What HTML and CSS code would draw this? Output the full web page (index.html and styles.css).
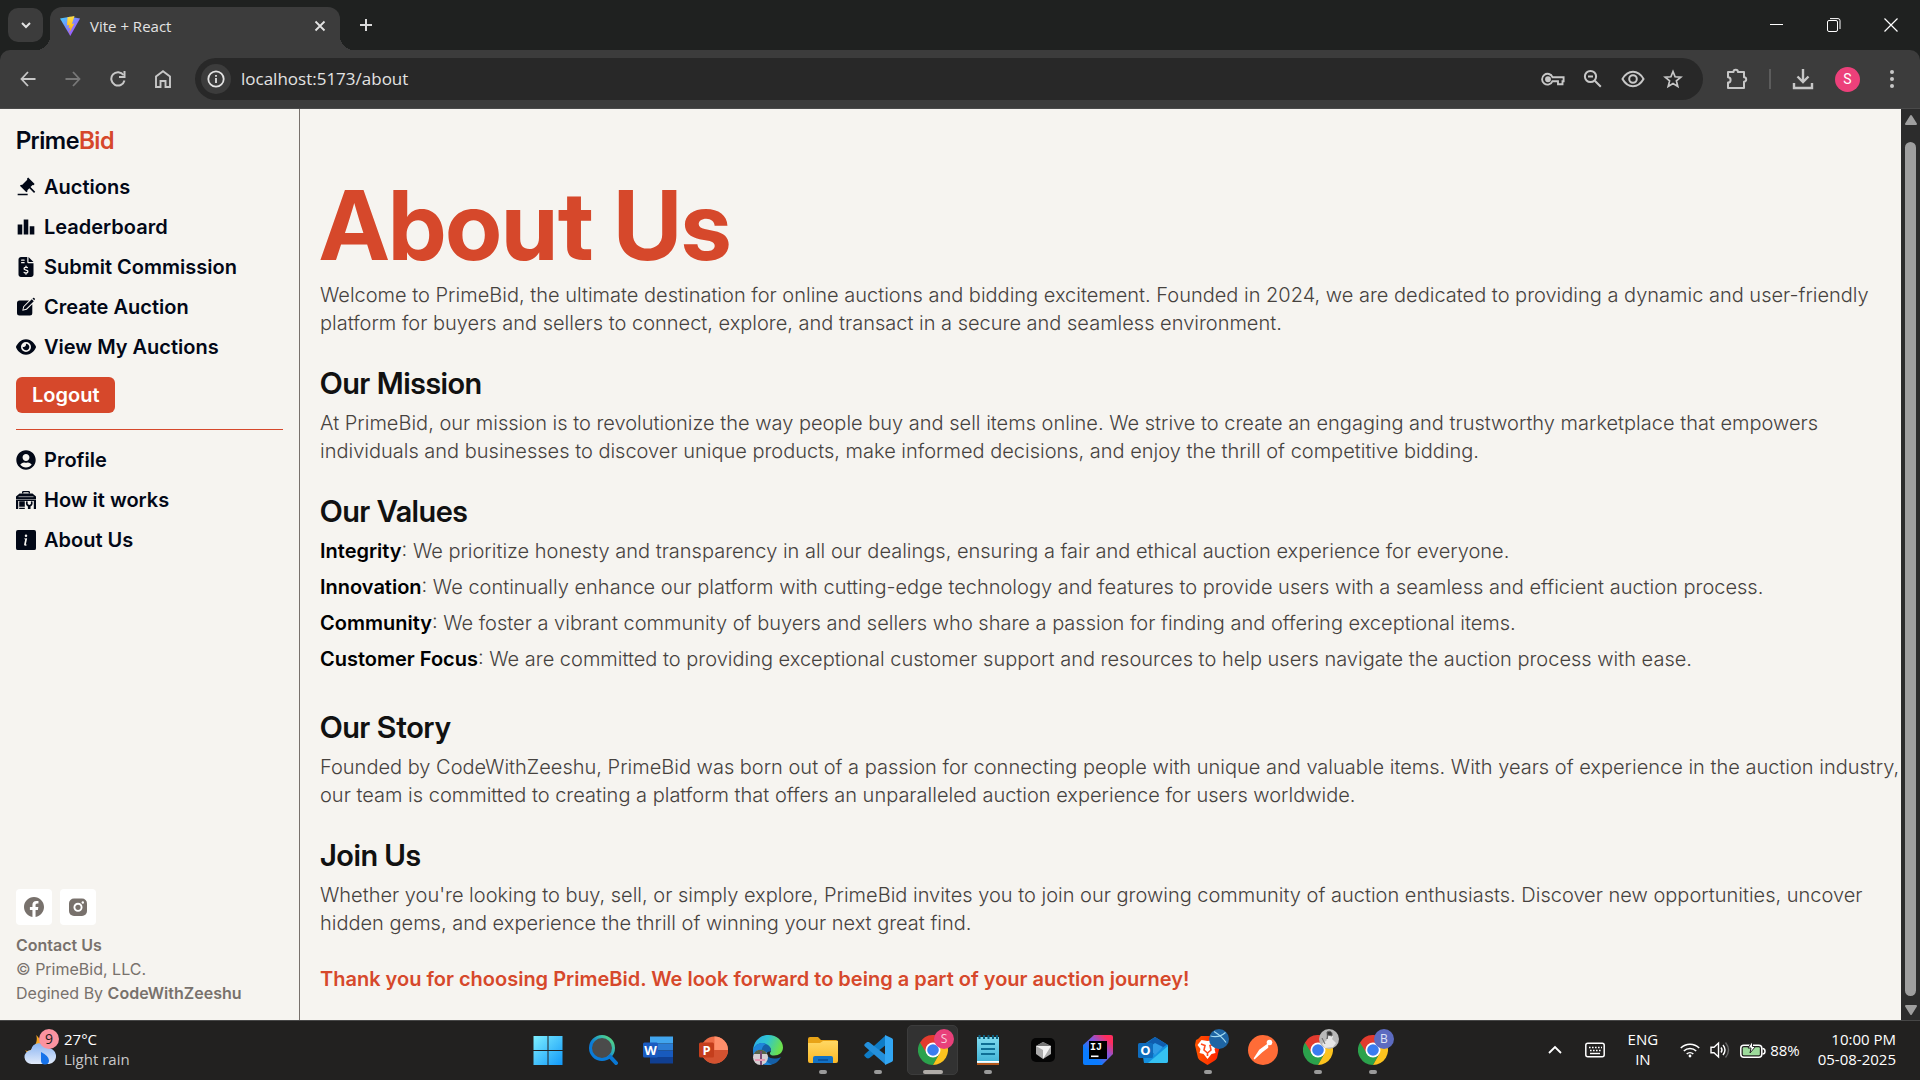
FILE: index.html
```html
<!DOCTYPE html>
<html lang="en">
<head>
<meta charset="utf-8">
<title>Vite + React</title>
<link rel="stylesheet" href="styles.css">
</head>
<body>
<svg class="defs" aria-hidden="true">
  <defs>
    <linearGradient id="vite-a" x1="0" y1="0" x2="1" y2="1"><stop offset="0" stop-color="#41d1ff"/><stop offset="1" stop-color="#bd34fe"/></linearGradient>
    <linearGradient id="vite-b" x1="0" y1="0" x2="0" y2="1"><stop offset="0" stop-color="#ffe04a"/><stop offset="1" stop-color="#ffa800"/></linearGradient>
    <linearGradient id="win" x1="0" y1="0" x2="1" y2="1"><stop offset="0" stop-color="#7defff"/><stop offset="1" stop-color="#1198f8"/></linearGradient>
    <linearGradient id="lens" x1="0" y1="1" x2="1" y2="0"><stop offset="0.4" stop-color="#0a7bd8"/><stop offset="0.7" stop-color="#34b8b0"/><stop offset="1" stop-color="#62e070"/></linearGradient>
    <linearGradient id="edge-a" x1="0" y1="0" x2="1" y2="0.3"><stop offset="0" stop-color="#2ba8ec"/><stop offset="0.5" stop-color="#2fc5d2"/><stop offset="1" stop-color="#6be04e"/></linearGradient>
    <linearGradient id="cloud" x1="0" y1="0" x2="0" y2="1"><stop offset="0" stop-color="#8ab4f2"/><stop offset="1" stop-color="#e2ebfa"/></linearGradient>
    <linearGradient id="folder" x1="0" y1="0" x2="0" y2="1"><stop offset="0" stop-color="#ffd864"/><stop offset="1" stop-color="#fbb826"/></linearGradient>
    <linearGradient id="idea" x1="0" y1="1" x2="1" y2="0"><stop offset="0.3" stop-color="#0a7cff"/><stop offset="0.6" stop-color="#8a55d8"/><stop offset="0.85" stop-color="#ff2d5e"/></linearGradient>
    <linearGradient id="note" x1="0" y1="0" x2="0" y2="1"><stop offset="0" stop-color="#80dcf0"/><stop offset="1" stop-color="#3fb3d6"/></linearGradient>
    <linearGradient id="brave" x1="0" y1="0" x2="1" y2="0"><stop offset="0" stop-color="#ff5500"/><stop offset="1" stop-color="#ff2000"/></linearGradient>
    <symbol id="chrome" viewBox="0 0 30 30">
      <path d="M15 15 2 7.500A15 15 0 0 1 28 7.500L28 8H15z" fill="#e33b2e"/>
      <path d="M15 15 2 7.500A15 15 0 0 0 15 30L21.500 18.500z" fill="#2ba24c"/>
      <path d="M15 8H28.300A15 15 0 0 1 15 30L21.500 18.500z" fill="#fcc31e"/>
      <path d="M2 7.500 8.500 18.500 15 15z" fill="#2ba24c"/>
      <path d="M2 7.500 8.500 18 15 8H28L15 3z" fill="#e33b2e"/>
      <circle cx="15" cy="15" r="7.500" fill="#fff"/><circle cx="15" cy="15" r="5.800" fill="#3a7cf0"/>
    </symbol>
  </defs>
</svg>

<header class="browser">
  <div class="tabstrip">
    <button class="tab-search" aria-label="Search tabs"><svg width="12" height="12" viewBox="0 0 12 12"><path d="M2 4l4 4 4-4" fill="none" stroke="#e3e3e3" stroke-width="2"/></svg></button>
    <div class="tab">
      <svg width="20" height="20" viewBox="0 0 20 20"><path d="M0 2.500 10 .8 20 2.500 10.300 20z" fill="url(#vite-a)"/><path d="M14.500 0 7.500 1.300 7 9.500l2.200-.5-.7 3.200 2-.6-1.400 5.600 5.200-9.700-2.400.5z" fill="url(#vite-b)"/></svg>
      <span class="tab-title">Vite + React</span>
      <button class="icon-button tab-close" aria-label="Close tab"><svg width="12" height="12" viewBox="0 0 12 12"><path d="M1.500 1.500l9 9m0-9l-9 9" stroke="#e3e3e3" stroke-width="1.800"/></svg></button>
    </div>
    <button class="icon-button new-tab" aria-label="New tab"><svg width="14" height="14" viewBox="0 0 14 14"><path d="M7 1v12M1 7h12" stroke="#dadada" stroke-width="2"/></svg></button>
    <div class="window-buttons">
      <button class="icon-button" aria-label="Minimize"><svg width="14" height="14" viewBox="0 0 14 14"><path d="M0 6.500h13" stroke="#fff"/></svg></button>
      <button class="icon-button" aria-label="Restore"><svg width="14" height="14" viewBox="0 0 14 14" fill="none" stroke="#fff"><rect x=".5" y="2.500" width="10" height="11" rx="1.500"/><path d="M3 .6h8a2 2 0 0 1 2 2v8.400"/></svg></button>
      <button class="icon-button" aria-label="Close"><svg width="14" height="14" viewBox="0 0 14 14"><path d="M.5.5l13 13m0-13l-13 13" stroke="#fff" stroke-width="1.200"/></svg></button>
    </div>
  </div>
  <div class="toolbar">
    <div class="nav-buttons">
      <button class="icon-button" aria-label="Back"><svg width="16" height="16" viewBox="0 0 16 16" fill="none" stroke="#c7c7c7" stroke-width="1.800"><path d="M15.500 8H1.500M8 1L1.500 8 8 15"/></svg></button>
      <button class="icon-button" aria-label="Forward"><svg width="16" height="16" viewBox="0 0 16 16" fill="none" stroke="#787878" stroke-width="1.800"><path d="M.5 8h14M8 1l6.500 7L8 15"/></svg></button>
      <button class="icon-button" aria-label="Reload"><svg width="16" height="16" viewBox="0 0 16 16" fill="none" stroke="#c7c7c7" stroke-width="2"><path d="M14.500 9.500A6.700 6.700 0 1 1 13.500 4"/><path d="M14.500 0v6H9"/></svg></button>
      <button class="icon-button" aria-label="Home"><svg width="16" height="18" viewBox="0 0 16 18" fill="none" stroke="#c7c7c7" stroke-width="1.900"><path d="M1 17V6.500l7-5.300 7 5.300V17h-4.500v-6h-5v6z"/></svg></button>
    </div>
    <div class="omnibox">
      <button class="site-info" aria-label="Site information"><svg width="18" height="18" viewBox="0 0 18 18"><circle cx="9" cy="9" r="7.700" fill="none" stroke="#e3e3e3" stroke-width="1.800"/><path d="M9 8v5M9 5v1.800" stroke="#e3e3e3" stroke-width="1.800"/></svg></button>
      <input class="address" type="text" aria-label="Address" value="localhost:5173/about">
      <div class="omnibox-actions">
        <button class="icon-button" aria-label="Passwords"><svg width="24" height="24" viewBox="0 0 24 24" fill="none" stroke="#c7c7c7" stroke-width="1.900"><path d="M11.500 10.200A5.400 5.400 0 1 0 11.500 14.200H17v3h4.500v-3H22.600v-4z"/><circle cx="7" cy="12.200" r="2" fill="#c7c7c7"/></svg></button>
        <button class="icon-button" aria-label="Zoom"><svg width="20" height="20" viewBox="0 0 20 20" fill="none" stroke="#c7c7c7" stroke-width="2"><circle cx="7.500" cy="7.500" r="5.600"/><path d="M11.800 11.800l6 6M5 7.500h5"/></svg></button>
        <button class="icon-button" aria-label="Reading view"><svg width="24" height="24" viewBox="0 0 24 24" fill="none" stroke="#c7c7c7" stroke-width="2"><path d="M1.500 12Q5.500 4.800 12 4.800T22.500 12Q18.500 19.200 12 19.200T1.500 12z"/><circle cx="12" cy="12" r="3.800"/></svg></button>
        <button class="icon-button" aria-label="Bookmark"><svg width="20" height="20" viewBox="0 0 20 20" fill="none" stroke="#c7c7c7" stroke-width="1.700"><path d="M10 2.500l2.100 5.300 5.700.4-4.400 3.700 1.400 5.600L10 14.500l-4.800 3 1.400-5.600L2.200 8.200l5.700-.4z"/></svg></button>
      </div>
    </div>
    <div class="toolbar-end">
      <button class="icon-button" aria-label="Extensions"><svg width="22" height="22" viewBox="0 0 22 22"><path d="M2 4h5.500a2.200 2.200 0 0 1 4.400 0H18v5.300a2.200 2.200 0 0 1 0 4.400V20H2v-5.500a2.600 2.600 0 0 0 0-5.200z" fill="none" stroke="#c7c7c7" stroke-width="2" stroke-linejoin="round"/></svg></button>
      <span class="toolbar-rule"></span>
      <button class="icon-button" aria-label="Downloads"><svg width="22" height="22" viewBox="0 0 22 22" fill="none" stroke="#c7c7c7" stroke-width="2.400"><path d="M11 1v13M5.500 8.500L11 14l5.500-5.500M2 15v5h18v-5"/></svg></button>
      <button class="avatar">S</button>
      <button class="icon-button more" aria-label="Menu"><svg width="6" height="20" viewBox="0 0 6 20" fill="#c7c7c7"><circle cx="3" cy="3" r="2"/><circle cx="3" cy="10" r="2"/><circle cx="3" cy="17" r="2"/></svg></button>
    </div>
  </div>
</header>

<div class="viewport">
  <aside class="sidebar">
    <a class="brand" href="#">Prime<span class="accent">Bid</span></a>
    <nav class="menu">
      <a href="#"><svg viewBox="0 0 24 24"><path d="M14 20v2H2v-2h12zM14.586.686l7.778 7.778L20.950 9.880l-1.060-.354L17.413 12l5.657 5.657-1.414 1.414L16 13.414l-2.404 2.404.283 1.132-1.415 1.414-7.778-7.778 1.415-1.414 1.130.282 6.294-6.293-.353-1.060L14.586.686z"/></svg>Auctions</a>
      <a href="#"><svg viewBox="0 0 24 24"><path d="M7.500 21H2V9h5.500v12zm7.250-18h-5.500v18h5.500V3zM22 11h-5.500v10H22V11z"/></svg>Leaderboard</a>
      <a href="#"><svg viewBox="0 0 384 512"><path d="M64 0C28.700 0 0 28.700 0 64V448c0 35.300 28.700 64 64 64H320c35.300 0 64-28.700 64-64V160H256c-17.700 0-32-14.300-32-32V0H64zM256 0V128H384L256 0zM64 80c0-8.800 7.200-16 16-16h64c8.800 0 16 7.200 16 16s-7.200 16-16 16H80c-8.800 0-16-7.200-16-16zm0 64c0-8.800 7.200-16 16-16h64c8.800 0 16 7.200 16 16s-7.200 16-16 16H80c-8.800 0-16-7.200-16-16zm128 72c8.800 0 16 7.200 16 16v17.300c8.500 1.200 16.700 3.100 24.100 5.100c8.500 2.300 13.600 11 11.300 19.600s-11 13.600-19.600 11.300c-11.100-3-22-5.200-32.100-5.300c-8.400-.1-17.400 1.800-23.600 5.500c-5.700 3.400-8.100 7.300-8.100 12.800c0 3.700 1.300 6.500 7.300 10.100c6.900 4.100 16.600 7.100 29.200 10.900l.5 .1c11.300 3.400 25.300 7.600 36.300 14.600c12.100 7.600 22.400 19.700 22.700 38.200c.3 19.300-9.600 33.300-22.900 41.600c-7.700 4.800-16.400 7.600-25.100 9.100V440c0 8.800-7.200 16-16 16s-16-7.200-16-16V422.200c-11.200-2.100-21.700-5.700-30.900-8.900c-2.100-.7-4.200-1.400-6.200-2.100c-8.400-2.800-12.900-11.900-10.100-20.200s11.900-12.900 20.200-10.100c2.500 .8 4.800 1.600 7.100 2.400c13.600 4.600 24.600 8.400 36.300 8.700c9.100 .3 17.900-1.700 23.700-5.300c5.100-3.200 7.900-7.300 7.800-14c-.1-4.600-1.800-7.800-7.700-11.600c-6.800-4.300-16.500-7.400-29-11.200l-1.600-.5c-11-3.300-24.300-7.300-34.800-13.700c-12-7.200-22.600-18.900-22.700-37.300c-.1-19.400 10.800-32.800 23.800-40.500c7.500-4.400 15.800-7.200 24.100-8.700V232c0-8.800 7.200-16 16-16z"/></svg>Submit Commission</a>
      <a href="#"><svg viewBox="0 0 20 20"><path d="M3.500 3.500H13L7.200 9.400 6.300 13.800l4.500-1L16.300 7.200V16a2.500 2.500 0 0 1-2.500 2.500H3.500A2.500 2.500 0 0 1 1 16V6a2.500 2.500 0 0 1 2.500-2.500z"/><path d="M7.400 12.600l.8-2.800 7.600-7.600 2 2-7.600 7.600zM16.500 1.600l.9-.9c.5-.4 2.100 1 1.600 1.600l-.8.9z" /></svg>Create Auction</a>
      <a href="#"><svg viewBox="0 0 576 512"><path d="M288 32c-80.800 0-145.500 36.800-192.600 80.600C48.600 156 17.300 208 2.500 243.700c-3.300 7.900-3.300 16.700 0 24.600C17.300 304 48.600 356 95.400 399.400C142.500 443.200 207.200 480 288 480s145.500-36.800 192.600-80.600c46.800-43.500 78.100-95.400 93-131.100c3.300-7.900 3.300-16.700 0-24.600c-14.900-35.700-46.200-87.700-93-131.100C433.500 68.800 368.800 32 288 32zM144 256a144 144 0 1 1 288 0 144 144 0 1 1 -288 0zm144-64c0 35.300-28.700 64-64 64c-7.100 0-13.900-1.200-20.300-3.300c-5.500-1.800-11.900 1.600-11.700 7.400c.3 6.900 1.300 13.800 3.200 20.700c13.700 51.200 66.400 81.600 117.600 67.900s81.600-66.400 67.900-117.600c-11.100-41.500-47.800-69.400-88.600-71.100c-5.800-.2-9.200 6.100-7.400 11.700c2.100 6.400 3.300 13.200 3.300 20.300z"/></svg>View My Auctions</a>
    </nav>
    <button class="logout">Logout</button>
    <hr class="divider">
    <nav class="menu">
      <a href="#"><svg viewBox="0 0 496 512"><path d="M248 8C111 8 0 119 0 256s111 248 248 248 248-111 248-248S385 8 248 8zm0 96c48.600 0 88 39.400 88 88s-39.400 88-88 88-88-39.400-88-88 39.400-88 88-88zm0 344c-58.700 0-111.300-26.600-146.500-68.200 18.800-35.400 55.600-59.800 98.500-59.800 2.400 0 4.800.4 7.100 1.100 13 4.200 26.600 6.900 40.900 6.900 14.300 0 28-2.700 40.900-6.900 2.300-.7 4.700-1.100 7.100-1.100 42.900 0 79.700 24.400 98.500 59.800C359.300 421.400 306.700 448 248 448z"/></svg>Profile</a>
      <a href="#"><svg viewBox="0 0 20 20"><path d="M6 3.500V2.300Q6 1 7.300 1h5.400Q14 1 14 2.300v1.200h-1.400V2.300H7.400v1.200z"/><path d="M3.500 3.500h13L20 6.500V9H0V6.500z"/><path d="M0 9.600h20V19h-2.200v-8H2.200v8H0z"/><path d="M3.200 11.300h5.600v5.500H3.200zM3.200 17.700h5.600V19H3.200zM10.200 11.300c-1 2.600.2 4.600 1.700 5.300V19h2.600v-2.400c1.700-.8 2.800-2.900 1.800-5.300l-1.400.2v2.600l-1.700.8-1.500-.8v-2.600z"/><path d="M2.500 6.700h15" stroke="#f6f4f0" stroke-width=".6"/></svg>How it works</a>
      <a href="#"><svg viewBox="0 0 16 16"><path d="M0 1.500A1.500 1.500 0 0 1 1.500 0h13A1.500 1.500 0 0 1 16 1.500v13a1.500 1.500 0 0 1-1.500 1.500h-13A1.500 1.500 0 0 1 0 14.500zm8.930 5.088-2.290.287-.082.380.450.083c.294.070.352.176.288.469l-.738 3.468c-.194.897.105 1.319.808 1.319.545 0 1.178-.252 1.465-.598l.088-.416c-.2.176-.492.246-.686.246-.275 0-.375-.193-.304-.533L8.930 6.588zM8 5.500a1 1 0 1 0 0-2 1 1 0 0 0 0 2z"/></svg>About Us</a>
    </nav>
    <footer class="side-footer">
      <div class="social">
        <a href="#" aria-label="Facebook"><svg viewBox="2 2 20 20"><path d="M12 2C6.477 2 2 6.477 2 12c0 4.991 3.657 9.128 8.438 9.879V14.890h-2.540V12h2.540V9.797c0-2.506 1.492-3.890 3.777-3.890 1.094 0 2.238.195 2.238.195v2.460h-1.260c-1.243 0-1.630.771-1.630 1.562V12h2.773l-.443 2.890h-2.330v6.989C18.343 21.129 22 16.990 22 12c0-5.523-4.477-10-10-10z"/></svg></a>
        <a href="#" aria-label="Instagram"><svg viewBox="0 0 20 20"><rect x="1" y="1.500" width="18" height="17.500" rx="5"/><circle cx="10" cy="10.300" r="3.600" fill="none" stroke="#fff" stroke-width="1.900"/><circle cx="14.800" cy="5.500" r="1.200" fill="#fff"/></svg></a>
      </div>
      <a class="strong" href="#">Contact Us</a>
      <span>© PrimeBid, LLC.</span>
      <span>Degined By <a class="strong" href="#">CodeWithZeeshu</a></span>
    </footer>
  </aside>

  <main class="content">
    <h1>About Us</h1>
    <p>Welcome to PrimeBid, the ultimate destination for online auctions and bidding excitement. Founded in 2024, we are dedicated to providing a dynamic and user-friendly platform for buyers and sellers to connect, explore, and transact in a secure and seamless environment.</p>
    <section>
      <h2>Our Mission</h2>
      <p>At PrimeBid, our mission is to revolutionize the way people buy and sell items online. We strive to create an engaging and trustworthy marketplace that empowers individuals and businesses to discover unique products, make informed decisions, and enjoy the thrill of competitive bidding.</p>
    </section>
    <section>
      <h2>Our Values</h2>
      <ul class="values">
        <li><b>Integrity</b>: We prioritize honesty and transparency in all our dealings, ensuring a fair and ethical auction experience for everyone.</li>
        <li><b>Innovation</b>: We continually enhance our platform with cutting-edge technology and features to provide users with a seamless and efficient auction process.</li>
        <li><b>Community</b>: We foster a vibrant community of buyers and sellers who share a passion for finding and offering exceptional items.</li>
        <li><b>Customer Focus</b>: We are committed to providing exceptional customer support and resources to help users navigate the auction process with ease.</li>
      </ul>
    </section>
    <section>
      <h2>Our Story</h2>
      <p>Founded by CodeWithZeeshu, PrimeBid was born out of a passion for connecting people with unique and valuable items. With years of experience in the auction industry, our team is committed to creating a platform that offers an unparalleled auction experience for users worldwide.</p>
    </section>
    <section>
      <h2>Join Us</h2>
      <p>Whether you're looking to buy, sell, or simply explore, PrimeBid invites you to join our growing community of auction enthusiasts. Discover new opportunities, uncover hidden gems, and experience the thrill of winning your next great find.</p>
    </section>
    <p class="thanks">Thank you for choosing PrimeBid. We look forward to being a part of your auction journey!</p>
  </main>

  <div class="scrollbar" aria-hidden="true">
    <svg width="14" height="12" viewBox="0 0 14 12"><path d="M7 2l5 8H2z" fill="#9f9f9f" stroke="#9f9f9f" stroke-width="2" stroke-linejoin="round"/></svg>
    <span class="thumb"></span>
    <svg width="14" height="12" viewBox="0 0 14 12"><path d="M7 10L2 2h10z" fill="#9f9f9f" stroke="#9f9f9f" stroke-width="2" stroke-linejoin="round"/></svg>
  </div>
</div>

<footer class="taskbar">
  <div class="weather">
    <div class="weather-icon">
      <svg width="32" height="32" viewBox="0 0 32 32"><path d="M12 1c2 4 0 10-3 13-3 3-6 4-8 2 3 5 11 6 14 2s2-14-3-17z" fill="#f5a623"/><path d="M8 30a7 7 0 0 1-1-14 8.500 8.500 0 0 1 16-2 8 8 0 0 1 2 16z" fill="url(#cloud)"/><path d="M17 18q8 4 8 8.500a4 4 0 0 1-8 0z" fill="#1672ea"/></svg>
      <span class="badge badge-pink">9</span>
    </div>
    <div class="weather-text"><span>27°C</span><span class="dim">Light rain</span></div>
  </div>

  <div class="apps">
    <button aria-label="Start"><svg viewBox="0 0 30 30" fill="url(#win)"><path d="M.5 1h14v14h-14zM15.500 1h14v14h-14zM.5 16h14v14h-14zM15.500 16h14v14h-14z"/></svg></button>
    <button aria-label="Search"><svg viewBox="0 0 30 30"><circle cx="14" cy="13" r="11.500" fill="#4b4b4b" stroke="url(#lens)" stroke-width="3"/><path d="M22 21.500l6 6.500" stroke="#0a78d4" stroke-width="4" stroke-linecap="round"/></svg></button>
    <button aria-label="Word"><svg viewBox="0 0 30 30"><path d="M7 1.500h23v7H7z" fill="#41a5ee"/><path d="M7 8.500h23v7H7z" fill="#2b7cd3"/><path d="M7 15.500h23v6.500H7z" fill="#185abd"/><path d="M7 22h23v6.500H7z" fill="#103f91"/><rect y="7.500" width="15" height="15" rx="1.500" fill="#1a5bc0"/><text class="glyph" x="7.500" y="19.500" text-anchor="middle" font-size="13">W</text></svg></button>
    <button aria-label="PowerPoint"><svg viewBox="0 0 30 30"><circle cx="16.500" cy="15" r="13.500" fill="#ed6c47"/><path d="M16.500 1.500A13.500 13.500 0 0 1 30 15H16.500z" fill="#ff8f6b"/><path d="M3 15a13.500 13.500 0 0 0 27 0z" fill="#d35230"/><rect x="1" y="7.500" width="15" height="15" rx="1.500" fill="#c43e1c"/><text class="glyph" x="8.500" y="19.500" text-anchor="middle" font-size="13">P</text></svg></button>
    <button aria-label="Edge"><svg viewBox="0 0 30 30"><path d="M0 15C1 6 7 0 15.500 0 24 0 30 6 30 12.500c0 5-4 8-9 8-3.500 0-5-1.500-3.500-3.500 1.500-2.500-.5-6-5-6C7 11 3 13 0 19z" fill="url(#edge-a)"/><path d="M0 15C3 8 9 7 13 9c4 1.500 6 5 4.500 7.500C15 16 13 17.500 14 20c2 4 9 4.500 14 2C25 28 20 30 15 30 6 30 0 24 0 15z" fill="#1560a8"/><path d="M0 15C3 8 9 7 13 9c-5 2-6 10-2 15 1.500 2 4 4 8 5.500C8 32 0 24 0 15z" fill="#1f86da"/><circle cx="7.500" cy="22.500" r="7.500" fill="#d5cfd2"/><path d="M.8 19a7.500 7.500 0 0 1 13.400 0z" fill="#56644a"/><path d="M8 16v14" stroke="#7a4a75" stroke-width="2"/><path d="M2 25h10" stroke="#e79ab5" stroke-width="2"/></svg></button>
    <button class="open" aria-label="File Explorer"><svg viewBox="0 0 30 30"><path d="M0 4a2 2 0 0 1 2-2h8l3 3h15a2 2 0 0 1 2 2v6H0z" fill="#e8a317"/><path d="M0 8h12l3-2h15v20a2 2 0 0 1-2 2H2a2 2 0 0 1-2-2z" fill="url(#folder)"/><path d="M5 28v-5a2 2 0 0 1 2-2h16a2 2 0 0 1 2 2v5z" fill="#1272c6"/><path d="M10 25h10" stroke="#0a4d92" stroke-width="1.500"/></svg></button>
    <button class="open" aria-label="Visual Studio Code"><svg viewBox="0 0 30 30"><path d="M22 1 2 19c-1 1-1 2 0 2.500l1.500 1.500c1 .6 2 .6 3 0L24 9z" fill="#0f7cc6"/><path d="M22 29 2 11.500c-1-1-1-2 0-2.800L3.500 7.500c1-.6 2-.6 3 0L24 21z" fill="#2490dc"/><path d="M22 0l7 3.300Q30 4 30 5v20q0 1-1 1.700L22 30z" fill="#32a6f3"/></svg></button>
    <button class="active" aria-label="Chrome, profile S"><svg viewBox="0 0 30 30"><use href="#chrome"/></svg><span class="badge badge-app badge-rose">S</span></button>
    <button class="open" aria-label="Notepad"><svg viewBox="0 0 30 30"><path d="M4 2h22v26H4z" fill="url(#note)"/><path d="M4 26h22v1.800H4z" fill="#fff"/><path d="M4 28h22v2H4z" fill="#b4581c"/><path d="M6.500 0v4M11 0v4M15.500 0v4M20 0v4M24 0v4" stroke="#0d5f7e" stroke-width="2"/><path d="M8 9h14M8 14h14M8 19h14" stroke="#0f6f95" stroke-width="1.800"/></svg></button>
    <button aria-label="Cursor"><svg viewBox="0 0 30 30"><rect x="3" y="3" width="24" height="24" rx="5" fill="#050505"/><path d="M15 7l8 4v8l-8 5-7-5v-8z" fill="#aaa"/><path d="M8 11h15l-8 13v-9z" fill="#f2f2f2"/><path d="M8 11l7-4 8 4z" fill="#777"/></svg></button>
    <button aria-label="IntelliJ IDEA"><svg viewBox="0 0 30 30"><path d="M0 10 11 0h17q2 0 2 2v17L19 30H2q-2 0-2-2z" fill="url(#idea)"/><path d="M6 6h18v18H6z"/><text class="glyph mono" x="7" y="15" font-size="10">IJ</text><path d="M8 21.300h7.500" stroke="#fff" stroke-width="1.600"/></svg></button>
    <button aria-label="Outlook"><svg viewBox="0 0 30 30"><path d="M3 11 17 2l13 8v16q0 2-2 2H6z" fill="#1490df"/><path d="M5 11 17 2l12 7.500L14 20z" fill="#0f5cae"/><path d="M10 13 17 8l8 4-8 8z" fill="#2f9be6"/><path d="M30 11v15q0 2-2 2H10z" fill="#35c1f1"/><rect y="8" width="15" height="15" rx="1.500" fill="#0f6cbd"/><text class="glyph" x="7.500" y="20" text-anchor="middle" font-size="13">O</text></svg></button>
    <button class="open" aria-label="Brave"><svg viewBox="0 0 30 30"><path d="M8 1h13l3 3 2 1 1 5-3 13q-1 2-3 3l-6.500 4L8 26q-2-1-3-3L2 10l1-5 2-1z" fill="url(#brave)"/><path d="M14.500 6l6-1 4 5-3 4 1 4-4 1-4 5-4-5-4-1 1-4-3-4 4-5z" fill="#fff"/><path d="M8 9l4 1.500-1 4.500 3.500 3 3.500-3-1-4.500L21 9M14.500 18v3" fill="none" stroke="#ff4a1c" stroke-width="1.600"/></svg><svg class="badge-app" viewBox="0 0 20 20"><circle cx="10" cy="10" r="10" fill="#1e65a4"/><path d="M1.500 7q9 2 15-3.500M5 2.500q8 5 12 11" fill="none" stroke="#a5dcf2" stroke-width="1.200"/></svg></button>
    <button aria-label="Postman"><svg viewBox="0 0 30 30"><circle cx="15" cy="15" r="15" fill="#ff6c37"/><circle cx="21.500" cy="7.500" r="2.800" fill="#fff"/><path d="M19.500 9.500 12 15l-5.500 8.500 7-6.500 6-4.500z" fill="#fff" stroke="#fff" stroke-width="1.500" stroke-linejoin="round"/></svg></button>
    <button class="open" aria-label="Chrome, photo profile"><svg viewBox="0 0 30 30"><use href="#chrome"/></svg><svg class="badge-app" viewBox="0 0 20 20"><circle cx="10" cy="10" r="10" fill="#b9b9b9"/><path d="M10 3c4 0 5 4 3 7l4 4-3 4-8 1-3-4 5-4c-2-4-1-8 2-8z" fill="#e6e6e6"/><path d="M8 3c3-2 6 0 5 4L9 6 8 10zM3 9l3 6" fill="#333" stroke="#666"/></svg></button>
    <button class="open" aria-label="Chrome, profile B"><svg viewBox="0 0 30 30"><use href="#chrome"/></svg><span class="badge badge-app badge-indigo">B</span></button>
  </div>

  <div class="tray">
    <button class="icon-button" aria-label="Show hidden icons"><svg width="14" height="10" viewBox="0 0 14 10"><path d="M1 8l6-6 6 6" fill="none" stroke="#fff" stroke-width="1.800"/></svg></button>
    <button class="icon-button" aria-label="Touch keyboard"><svg width="20" height="16" viewBox="0 0 20 16" fill="none" stroke="#fff"><rect x=".8" y="1.300" width="18.400" height="13.400" rx="2" stroke-width="1.500"/><path d="M4 5.500h13M5 8.500h11" stroke-width="1.600" stroke-dasharray="1.600 1.400"/><path d="M5 11.500h10" stroke-width="1.400"/></svg></button>
    <button class="stack language"><span>ENG</span><span>IN</span></button>
    <button class="status" aria-label="Network, volume, battery">
      <svg width="20" height="16" viewBox="0 0 20 16" fill="none" stroke="#fff" stroke-width="1.500"><path d="M.8 6a13 13 0 0 1 18.400 0M3.800 9a8.800 8.800 0 0 1 12.400 0M6.700 12a4.700 4.700 0 0 1 6.600 0"/><circle cx="10" cy="14" r="1.400" fill="#fff" stroke="none"/></svg>
      <svg width="20" height="18" viewBox="0 0 20 18" fill="none" stroke="#fff" stroke-width="1.400"><path d="M1 6.200h3L8.500 2v14L4 11.800H1z"/><path d="M11 6.500q2 2.500 0 5M13 4q4 5 0 10"/><path d="M15.500 1.500q6 7.500 0 15" stroke="#666"/></svg>
      <svg width="26" height="18" viewBox="0 0 26 18"><rect x=".8" y="4.300" width="21" height="12" rx="3" fill="none" stroke="#fff" stroke-width="1.500"/><rect x="2.800" y="6.300" width="17" height="8" rx="1" fill="#9ddb9b"/><path d="M22.500 7.500q2.500 0 2.500 2.800t-2.500 2.800" fill="none" stroke="#fff" stroke-width="1.500"/><path d="M12.500 0L8 7h3L10 12 15.500 5.500h-3z" fill="#fff" stroke="#222"/></svg>
      <span>88%</span>
    </button>
    <button class="stack clock"><span>10:00 PM</span><span>05-08-2025</span></button>
  </div>
</footer>
</body>
</html>
```
FILE: styles.css
```css
*, *::before, *::after { box-sizing: border-box; }

body {
  margin: 0;
  min-height: 100vh;
  display: flex;
  flex-direction: column;
  font-family: Inter, "Liberation Sans", sans-serif;
  background: #f6f4f0;
}

h1, h2, p, ul { margin: 0; padding: 0; }
a { color: inherit; text-decoration: none; }
button, input { font: inherit; color: inherit; border: 0; padding: 0; background: none; }
svg { display: block; flex: none; }

.defs { position: absolute; width: 0; height: 0; }
.icon-button { display: grid; place-items: center; }

/* Browser window */
.browser { font-family: "Open Sans", "Noto Sans", sans-serif; background: #1f2120; color: #e3e3e3; }
.tabstrip { display: flex; align-items: center; height: 50px; padding-left: 8px; }
.tab-search { display: grid; place-items: center; width: 35px; height: 34px; border-radius: 10px; background: #3c3c3c; }
.tab {
  position: relative;
  display: flex;
  align-items: center;
  gap: 10px;
  align-self: flex-end;
  width: 290px;
  height: 43px;
  margin-left: 7px;
  padding: 0 14px 6px 10px;
  border-radius: 12px 12px 0 0;
  background: #3c3c3c;
}
.tab::before, .tab::after { content: ""; position: absolute; bottom: 0; width: 14px; height: 14px; }
.tab::before { left: -14px; background: radial-gradient(circle at 0 0, transparent 14px, #3c3c3c 14px); }
.tab::after { right: -14px; background: radial-gradient(circle at 100% 0, transparent 14px, #3c3c3c 14px); }
.tab-title { font-size: 15px; line-height: 20px; }
.tab-close { margin-left: auto; }
.new-tab { margin-left: 19px; }
.window-buttons { display: flex; gap: 43px; margin-left: auto; padding-right: 22px; }

.toolbar {
  display: flex;
  align-items: center;
  height: 59px;
  padding: 0 25px 0 20px;
  border-bottom: 1px solid #4a4a4a;
  border-radius: 10px 10px 0 0;
  background: #3c3c3c;
}
.nav-buttons { display: flex; align-items: center; gap: 29px; margin-right: 24px; }
.omnibox {
  display: flex;
  align-items: center;
  flex: 1;
  height: 42px;
  padding: 0 20px 0 6px;
  border-radius: 21px;
  background: #282828;
}
.site-info { display: grid; place-items: center; width: 30px; height: 30px; border-radius: 50%; background: #3c3c3c; }
.address { flex: 1; min-width: 0; margin-left: 10px; font-size: 17px; line-height: 24px; outline: 0; }
.omnibox-actions { display: flex; align-items: center; gap: 18px; }
.toolbar-end { display: flex; align-items: center; gap: 21px; margin-left: 23px; }
.toolbar-rule { width: 2px; height: 20px; background: #5c5c5c; }
.avatar { width: 25px; height: 25px; border-radius: 50%; background: #ec407a; color: #fff; font-family: Roboto, sans-serif; font-size: 14px; line-height: 25px; }
.more { margin-left: 8px; }

/* Page */
.viewport { flex: 1; display: flex; }
.sidebar {
  display: flex;
  flex-direction: column;
  align-items: flex-start;
  flex: none;
  width: 300px;
  padding: 16px 16px 15px;
  border-right: 1px solid #78716c;
  color: #020817;
}
.brand { margin-bottom: 16px; font-family: "Inter Display", Inter, sans-serif; font-size: 24px; line-height: 32px; font-weight: 600; }
.accent { color: #d6482b; }
.menu { display: flex; flex-direction: column; gap: 12px; }
.menu a { display: flex; align-items: center; gap: 8px; font-size: 20px; line-height: 28px; font-weight: 600; }
.menu svg { width: 20px; height: 20px; fill: currentColor; }
.logout { margin: 16px 0; padding: 4px 16px; border-radius: 6px; background: #d6482b; color: #fff; font-size: 20px; line-height: 28px; font-weight: 600; }
.divider { align-self: stretch; margin: 0 0 16px; border: 0; border-top: 1px solid #d6482b; }
.side-footer { display: flex; flex-direction: column; margin-top: auto; color: #78716c; font-size: 16px; line-height: 24px; }
.social { display: flex; gap: 8px; margin-bottom: 8px; }
.social a { padding: 8px; border-radius: 4px; background: #fff; }
.social svg { width: 20px; height: 20px; fill: currentColor; }
.strong { font-weight: 600; }

.content {
  flex: 1;
  display: flex;
  flex-direction: column;
  gap: 28px;
  padding: 68px 0 26px 20px;
  color: #46423e;
  font-size: 20px;
  line-height: 28px;
  font-weight: 300;
}
h1, h2 { font-family: "Inter Display", Inter, sans-serif; }
h1 { margin-bottom: -20px; color: #d6482b; font-size: 96px; line-height: 96px; font-weight: 700; }
h2 { margin-bottom: 8px; color: #111; font-size: 30px; line-height: 36px; font-weight: 600; }
.values { list-style: none; }
.values li { margin-bottom: 8px; }
.values b { color: #000; font-weight: 600; }
.thanks { color: #d6482b; font-weight: 600; }

.scrollbar { display: flex; flex-direction: column; align-items: center; gap: 16px; width: 19px; padding: 5px 0 4px; background: #2c2c2c; }
.thumb { flex: 1; width: 11px; border-radius: 6px; background: #9f9f9f; }
.scrollbar svg:last-child { margin-top: -8px; }

/* Taskbar */
.taskbar {
  display: grid;
  grid-template-columns: 1fr auto 1fr;
  height: 60px;
  padding-bottom: 2px;
  border-top: 1px solid #474747;
  background: #222120;
  color: #fff;
  font-family: "Open Sans", "Noto Sans", sans-serif;
  font-size: 15px;
  line-height: 20px;
}
.weather { display: flex; align-items: center; gap: 8px; padding-left: 24px; }
.weather-icon { position: relative; }
.weather-text, .stack { display: flex; flex-direction: column; padding-bottom: 2px; }
.dim { color: #c8c8c8; }
.badge { display: grid; place-items: center; width: 20px; height: 20px; border-radius: 50%; font-size: 14px; line-height: 20px; }
.badge-pink { position: absolute; top: -5px; right: -3px; background: #fb93a0; color: #1c1c1c; }

.apps { display: flex; align-items: center; }
.apps button { position: relative; display: grid; place-items: center; width: 55px; height: 50px; }
.apps button > svg:first-child { width: 30px; height: 30px; }
.apps .open::after, .apps .active::after { content: ""; position: absolute; bottom: 1px; left: 50%; width: 8px; height: 4px; margin-left: -4px; border-radius: 2px; background: #9a9a9a; }
.apps .active::before { content: ""; position: absolute; inset: 0 2px; border: 1px solid #3c3c3c; border-radius: 5px; background: #323232; z-index: -1; }
.apps .active { z-index: 0; }
.apps .active::after { width: 20px; margin-left: -10px; background: #b0aca8; }
.badge-app { position: absolute; top: 4px; right: 6px; width: 20px; height: 20px; }
.badge-rose { background: #e8407a; color: #f9cfdc; font-size: 12px; }
.badge-indigo { background: #5c6bc0; color: #dfe3f5; font-size: 12px; }
.glyph { fill: #fff; font-weight: 700; }
.mono { font-family: "Liberation Mono", monospace; }

.tray { display: flex; align-items: center; justify-content: flex-end; padding-right: 24px; }
.tray > .icon-button:nth-child(2) { margin-left: 23px; }
.language { align-items: center; margin-left: 23px; }
.status { display: flex; align-items: center; gap: 10px; margin-left: 22px; }
.status span { margin-left: -6px; }
.clock { align-items: flex-end; margin-left: 18px; }
```
